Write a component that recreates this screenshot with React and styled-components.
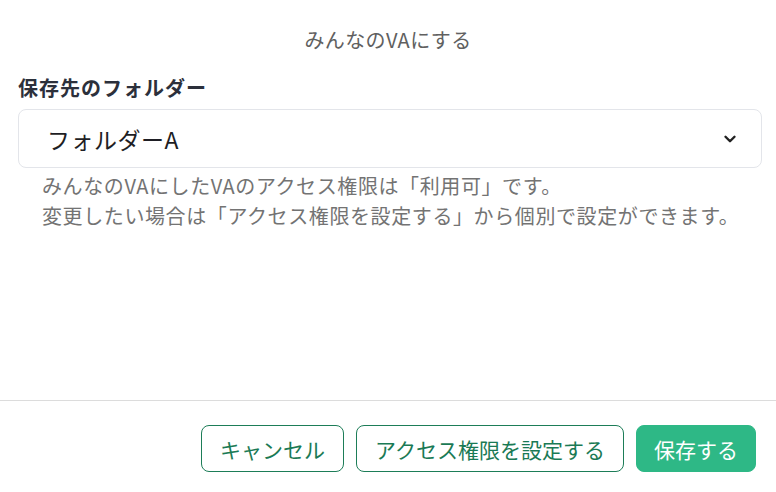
import * as React from "react";
import styled, { createGlobalStyle } from "styled-components";
import { ChevronDown } from "lucide-react";

const GlobalStyle = createGlobalStyle`
  html, body {
    margin: 0;
    padding: 0;
    background: #fff;
  }
  body {
    font-family: "Noto Sans CJK JP", "Noto Sans", sans-serif;
  }
  #root {
    height: 100vh;
  }
`;

const Modal = styled.div`
  display: flex;
  flex-direction: column;
  height: 100%;
  background: #fff;
`;

const Header = styled.header`
  padding-top: 26px;
  text-align: center;
  font-size: 20px;
  letter-spacing: 0.4px;
  line-height: 28px;
  color: #606060;
`;

const Body = styled.section`
  flex: 1;
  padding: 20px 14px 0 18px;
`;

const Label = styled.div`
  font-size: 20px;
  line-height: 28px;
  font-weight: 700;
  letter-spacing: 1px;
  color: #2c303b;
`;

const Select = styled.div`
  margin-top: 7px;
  height: 59px;
  box-sizing: border-box;
  border: 1px solid #e3e5ea;
  border-radius: 8px;
  display: flex;
  align-items: center;
  justify-content: space-between;
  padding: 0 22px 0 28px;
  font-size: 23px;
  color: #1e1e24;
  letter-spacing: 0.5px;
`;

const Note = styled.p`
  margin: 3px 0 0 24px;
  font-size: 20px;
  line-height: 30px;
  letter-spacing: 0.6px;
  color: #737373;
`;

const Footer = styled.footer`
  border-top: 1px solid #dcdcdc;
  padding: 24px 20px 20px;
  display: flex;
  justify-content: flex-end;
  gap: 12px;
`;

const Button = styled.button`
  height: 47px;
  box-sizing: border-box;
  padding: 0 ${(p) => (p.$primary ? "17px" : "18px")};
  border-radius: 8px;
  font-family: inherit;
  font-size: 21px;
  border: 1px solid ${(p) => (p.$primary ? "#2eb886" : "#1d7d58")};
  background: ${(p) => (p.$primary ? "#2eb886" : "#fff")};
  color: ${(p) => (p.$primary ? "#fff" : "#1a7a55")};
  cursor: pointer;
`;

export default function App() {
  return (
    <>
      <GlobalStyle />
      <Modal>
        <Header>みんなのVAにする</Header>
        <Body>
          <Label>保存先のフォルダー</Label>
          <Select>
            <span>フォルダーA</span>
            <ChevronDown size={18} strokeWidth={3.2} color="#222" />
          </Select>
          <Note>
            みんなのVAにしたVAのアクセス権限は「利用可」です。
            <br />
            変更したい場合は「アクセス権限を設定する」から個別で設定ができます。
          </Note>
        </Body>
        <Footer>
          <Button>キャンセル</Button>
          <Button>アクセス権限を設定する</Button>
          <Button $primary>保存する</Button>
        </Footer>
      </Modal>
    </>
  );
}
